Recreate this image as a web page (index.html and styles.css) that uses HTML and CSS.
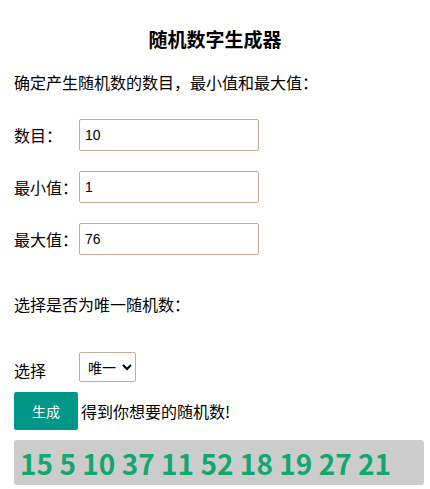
FILE: index.html
```html
<!DOCTYPE html>
<html lang="zh-CN">
<head>
  <meta charset="UTF-8">
  <title>随机数字生成器</title>
  <link rel="stylesheet" href="styles.css">
</head>
<body>

<h1>随机数字生成器</h1>

<div class="content">
  <p class="intro">确定产生随机数的数目，最小值和最大值：</p>

  <div class="row">
    <label for="count">数目：</label>
    <input type="text" id="count" value="10">
  </div>
  <div class="row">
    <label for="min">最小值：</label>
    <input type="text" id="min" value="1">
  </div>
  <div class="row">
    <label for="max">最大值：</label>
    <input type="text" id="max" value="76">
  </div>

  <p class="intro unique">选择是否为唯一随机数：</p>

  <div class="row pick">
    <label for="unique">选择</label>
    <select id="unique">
      <option value="1">唯一</option>
      <option value="0">重复</option>
    </select>
  </div>

  <div class="actions">
    <button type="button" id="generateBtn">生成</button>
    <span>得到你想要的随机数!</span>
  </div>

  <div class="result" id="result">15 5 10 37 11 52 18 19 27 21</div>
</div>

</body>
</html>
```

FILE: styles.css
```css
body {
  margin: 0;
  color: #000;
  font-family: "Noto Sans CJK SC", "Noto Sans", sans-serif;
  font-size: 16px;
}
h1 {
  margin: 26px 0 0;
  font-size: 19px;
  line-height: 26px;
  text-align: center;
}
.content {
  padding: 0 6px 0 14px;
}
.intro {
  margin: 18px 0 0;
  line-height: 24px;
}
.intro.unique {
  margin-top: 37px;
}
.row {
  display: flex;
  align-items: center;
  margin-top: 20px;
}
.row:first-of-type {
  margin-top: 25px;
}
.row label {
  width: 65px;
  flex-shrink: 0;
}
input {
  box-sizing: border-box;
  width: 180px;
  height: 32px;
  padding: 0 5px;
  border: 1px solid #cba896;
  border-radius: 2px;
  font-family: "Liberation Sans", Arial, sans-serif;
  font-size: 14px;
  color: #000;
}
.row.pick {
  margin-top: 35px;
}
.row.pick label {
  padding-top: 7px;
}
select {
  box-sizing: border-box;
  width: 57px;
  height: 30px;
  padding: 0 0 0 4px;
  border: 1px solid #cba896;
  border-radius: 2px;
  background-color: #fff;
  font-family: "Noto Sans CJK SC", sans-serif;
  font-size: 14px;
  color: #000;
}
.actions {
  display: flex;
  align-items: center;
  margin-top: 10px;
}
button {
  width: 64px;
  height: 38px;
  margin-right: 3px;
  border: none;
  border-radius: 2px;
  background-color: #009688;
  color: #fff;
  font-family: "Noto Sans CJK SC", sans-serif;
  font-size: 14px;
  cursor: pointer;
}
.result {
  margin-top: 10px;
  height: 45px;
  padding: 0 6px;
  border-radius: 3px;
  background-color: #ccc;
  color: #10a86f;
  font-size: 28px;
  font-weight: bold;
  line-height: 47px;
}
```
